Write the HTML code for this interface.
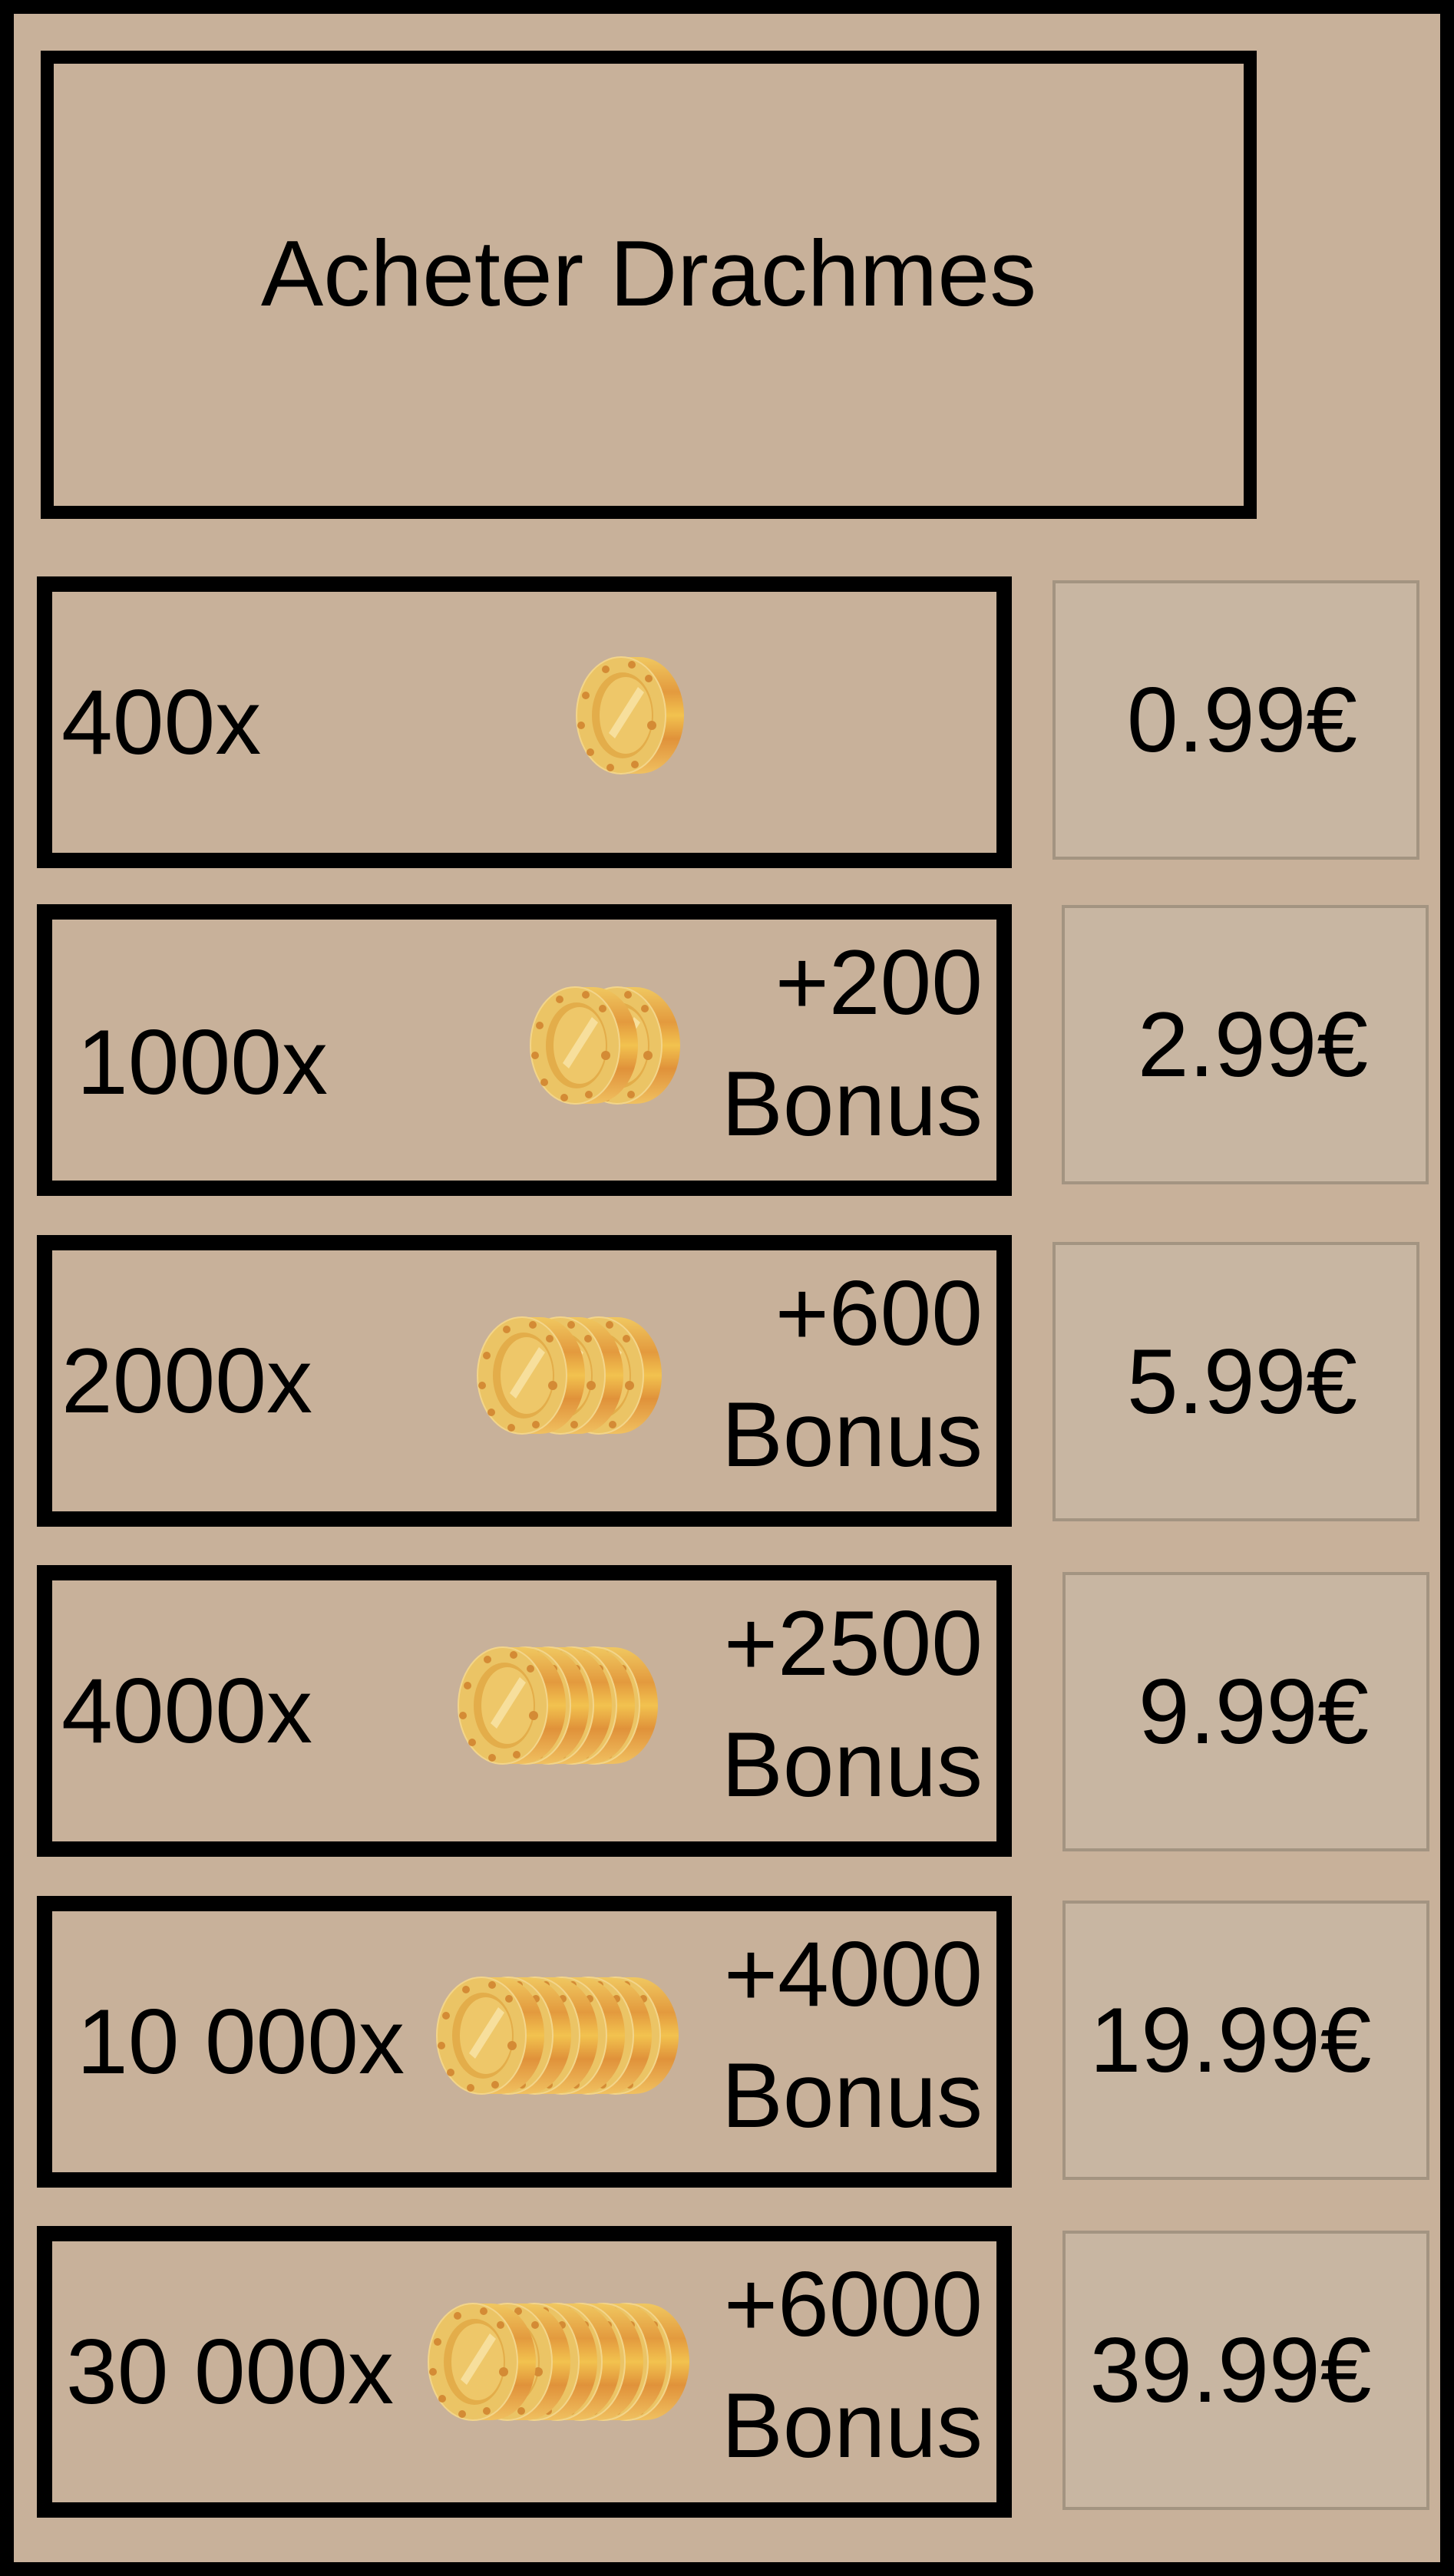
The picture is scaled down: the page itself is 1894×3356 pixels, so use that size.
<!DOCTYPE html>
<html><head><meta charset="utf-8"><style>
*{margin:0;padding:0;box-sizing:border-box}
body{width:1894px;height:3356px;background:#c8b19a;position:relative;overflow:hidden;font-family:"Liberation Sans",sans-serif;color:#000}
.outer{position:absolute;left:0;top:0;width:1894px;height:3356px;border:18px solid #000}
.title{position:absolute;left:53px;top:66px;width:1584px;height:610px;border:17px solid #000;display:flex;align-items:center;justify-content:center;font-size:122px;padding-bottom:30px}
.row{position:absolute;left:48px;width:1270px;height:380px;border:20px solid #000}
.lbl{position:absolute;font-size:120px;line-height:1;top:50%;transform:translateY(-50%);white-space:nowrap}
.bonus{position:absolute;right:18px;font-size:120px;line-height:158px;top:3px;text-align:right}
.price{position:absolute;width:478px;height:364px;border:4px solid #a39481;background:#c8b6a2;display:flex;align-items:center;justify-content:center;font-size:120px}
svg.c{position:absolute;overflow:visible}
</style></head><body>
<svg width="0" height="0" style="position:absolute">
<defs>
<linearGradient id="edge" x1="0" y1="0" x2="0" y2="1">
<stop offset="0" stop-color="#f0c860"/><stop offset=".3" stop-color="#e39a3e"/><stop offset=".5" stop-color="#f2c24f"/><stop offset=".7" stop-color="#e0923a"/><stop offset="1" stop-color="#f0c060"/></linearGradient>
<g id="coin">
<ellipse cx="88" cy="82" rx="58" ry="76" fill="url(#edge)"/>
<rect x="64" y="6" width="24" height="152" fill="url(#edge)"/>
<ellipse cx="64" cy="82" rx="58" ry="76" fill="#ebc465" stroke="#f3d58a" stroke-width="2"/>
<ellipse cx="66" cy="82" rx="40" ry="56" fill="#e3ad4a"/>
<ellipse cx="70" cy="82" rx="34" ry="50" fill="#eec769"/>
<path d="M48 105 L86 45 L94 52 L56 112Z" fill="#f7df9c"/>
<g fill="#d48b35"><circle cx="44" cy="22" r="5"/><circle cx="78" cy="16" r="5"/><circle cx="100" cy="34" r="5"/><circle cx="18" cy="56" r="5"/><circle cx="12" cy="95" r="5"/><circle cx="104" cy="95" r="6"/><circle cx="24" cy="130" r="5"/><circle cx="50" cy="150" r="5"/><circle cx="82" cy="146" r="5"/></g>
</g>
</defs></svg>
<div class="outer"></div>
<div class="title">Acheter Drachmes</div>

<div class="row" style="top:751px"><div class="lbl" style="left:12px">400x</div></div>
<svg class="c" style="left:745px;top:850px" width="150" height="165"><use href="#coin"/></svg>
<div class="price" style="left:1371px;top:756px;padding-left:16px">0.99€</div>

<div class="row" style="top:1178px"><div class="lbl" style="left:32px;margin-top:16px">1000x</div><div class="bonus">+200<br>Bonus</div></div>
<svg class="c" style="left:685px;top:1280px" width="220" height="165"><use href="#coin" x="55"/><use href="#coin"/></svg>
<div class="price" style="left:1383px;top:1179px;padding-left:20px">2.99€</div>

<div class="row" style="top:1609px"><div class="lbl" style="left:12px">2000x</div><div class="bonus">+600<br>Bonus</div></div>
<svg class="c" style="left:616px;top:1710px" width="300" height="165"><use href="#coin" x="100"/><use href="#coin" x="50"/><use href="#coin"/></svg>
<div class="price" style="left:1371px;top:1618px;padding-left:16px">5.99€</div>

<div class="row" style="top:2039px"><div class="lbl" style="left:12px">4000x</div><div class="bonus">+2500<br>Bonus</div></div>
<svg class="c" style="left:591px;top:2140px" width="300" height="165"><use href="#coin" x="120"/><use href="#coin" x="90"/><use href="#coin" x="60"/><use href="#coin" x="30"/><use href="#coin"/></svg>
<div class="price" style="left:1384px;top:2048px;padding-left:20px">9.99€</div>

<div class="row" style="top:2470px"><div class="lbl" style="left:32px">10 000x</div><div class="bonus">+4000<br>Bonus</div></div>
<svg class="c" style="left:563px;top:2570px" width="340" height="165"><use href="#coin" x="175"/><use href="#coin" x="140"/><use href="#coin" x="105"/><use href="#coin" x="70"/><use href="#coin" x="35"/><use href="#coin"/></svg>
<div class="price" style="left:1384px;top:2476px;padding-right:40px">19.99€</div>

<div class="row" style="top:2900px"><div class="lbl" style="left:18px">30 000x</div><div class="bonus">+6000<br>Bonus</div></div>
<svg class="c" style="left:552px;top:2995px" width="360" height="165"><use href="#coin" x="200"/><use href="#coin" x="170"/><use href="#coin" x="140"/><use href="#coin" x="110"/><use href="#coin" x="80"/><use href="#coin" x="45"/><use href="#coin"/></svg>
<div class="price" style="left:1384px;top:2906px;padding-right:40px">39.99€</div>
</body></html>
